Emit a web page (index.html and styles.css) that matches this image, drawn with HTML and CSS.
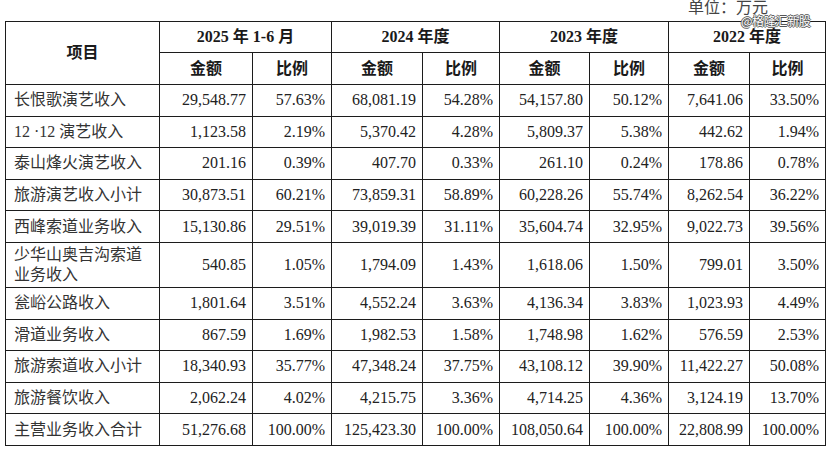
FILE: index.html
```html
<!DOCTYPE html>
<html lang="zh">
<head>
<meta charset="utf-8">
<link rel="stylesheet" href="styles.css">
</head>
<body>
<div class="page">
  <div class="unit">单位：万元</div>
  <div class="watermark">@格隆汇新股</div>
  <table class="grid">
    <colgroup>
      <col class="c-item"><col class="c-a1"><col class="c-b1"><col class="c-a2"><col class="c-b2"><col class="c-a3"><col class="c-b3"><col class="c-a4"><col class="c-b4">
    </colgroup>
    <thead>
      <tr class="h1">
        <th rowspan="2">项目</th>
        <th colspan="2">2025 年 1-6 月</th>
        <th colspan="2">2024 年度</th>
        <th colspan="2">2023 年度</th>
        <th colspan="2">2022 年度</th>
      </tr>
      <tr class="h2">
        <th>金额</th><th>比例</th><th>金额</th><th>比例</th><th>金额</th><th>比例</th><th>金额</th><th>比例</th>
      </tr>
    </thead>
    <tbody>
      <tr><td>长恨歌演艺收入</td><td>29,548.77</td><td>57.63%</td><td>68,081.19</td><td>54.28%</td><td>54,157.80</td><td>50.12%</td><td>7,641.06</td><td>33.50%</td></tr>
      <tr><td>12 ·12 演艺收入</td><td>1,123.58</td><td>2.19%</td><td>5,370.42</td><td>4.28%</td><td>5,809.37</td><td>5.38%</td><td>442.62</td><td>1.94%</td></tr>
      <tr><td>泰山烽火演艺收入</td><td>201.16</td><td>0.39%</td><td>407.70</td><td>0.33%</td><td>261.10</td><td>0.24%</td><td>178.86</td><td>0.78%</td></tr>
      <tr><td>旅游演艺收入小计</td><td>30,873.51</td><td>60.21%</td><td>73,859.31</td><td>58.89%</td><td>60,228.26</td><td>55.74%</td><td>8,262.54</td><td>36.22%</td></tr>
      <tr><td>西峰索道业务收入</td><td>15,130.86</td><td>29.51%</td><td>39,019.39</td><td>31.11%</td><td>35,604.74</td><td>32.95%</td><td>9,022.73</td><td>39.56%</td></tr>
      <tr class="tall"><td>少华山奥吉沟索道业务收入</td><td>540.85</td><td>1.05%</td><td>1,794.09</td><td>1.43%</td><td>1,618.06</td><td>1.50%</td><td>799.01</td><td>3.50%</td></tr>
      <tr><td>瓮峪公路收入</td><td>1,801.64</td><td>3.51%</td><td>4,552.24</td><td>3.63%</td><td>4,136.34</td><td>3.83%</td><td>1,023.93</td><td>4.49%</td></tr>
      <tr><td>滑道业务收入</td><td>867.59</td><td>1.69%</td><td>1,982.53</td><td>1.58%</td><td>1,748.98</td><td>1.62%</td><td>576.59</td><td>2.53%</td></tr>
      <tr><td>旅游索道收入小计</td><td>18,340.93</td><td>35.77%</td><td>47,348.24</td><td>37.75%</td><td>43,108.12</td><td>39.90%</td><td>11,422.27</td><td>50.08%</td></tr>
      <tr><td>旅游餐饮收入</td><td>2,062.24</td><td>4.02%</td><td>4,215.75</td><td>3.36%</td><td>4,714.25</td><td>4.36%</td><td>3,124.19</td><td>13.70%</td></tr>
      <tr><td>主营业务收入合计</td><td>51,276.68</td><td>100.00%</td><td>125,423.30</td><td>100.00%</td><td>108,050.64</td><td>100.00%</td><td>22,808.99</td><td>100.00%</td></tr>
    </tbody>
  </table>
</div>
</body>
</html>
```

FILE: styles.css
```css
html, body {
  margin: 0;
  padding: 0;
  background: #ffffff;
}

.page {
  position: relative;
  width: 831px;
  height: 450px;
  font-family: "Liberation Serif", "Noto Sans CJK SC", serif;
  color: #222;
}

.unit {
  height: 21px;
  box-sizing: border-box;
  padding-right: 63px;
  text-align: right;
  font-size: 16px;
  line-height: 15px;
  color: #444;
}

.watermark {
  position: absolute;
  left: 741px;
  top: 15px;
  font-family: "Noto Sans CJK SC", sans-serif;
  font-size: 12px;
  line-height: 12px;
  color: #fff;
  letter-spacing: -0.3px;
  text-shadow: 1px 0 0 #555, -1px 0 0 #555, 0 1px 0 #555, 0 -1px 0 #555;
}

.grid {
  margin-left: 5px;
  width: 820px;
  border-collapse: collapse;
  table-layout: fixed;
  font-size: 16px;
}

.c-item { width: 154px; }
.c-a1 { width: 93px; }
.c-b1 { width: 79px; }
.c-a2 { width: 91px; }
.c-b2 { width: 77px; }
.c-a3 { width: 90px; }
.c-b3 { width: 79px; }
.c-a4 { width: 81px; }
.c-b4 { width: 76px; }

.grid th,
.grid td {
  border: 1px solid #1c1c1c;
  padding: 0 7px;
  line-height: 20px;
  white-space: nowrap;
}

.grid th {
  font-weight: bold;
  text-align: center;
  color: #1a1a1a;
}

.h1 { height: 31px; }
.h2 { height: 32px; }

.grid tbody tr { height: 31.6px; }
.grid tbody tr.tall { height: 45px; }

.grid td {
  text-align: right;
  padding-right: 6px;
}

.grid td:first-child {
  text-align: left;
  padding-left: 8px;
  color: #333;
  white-space: normal;
}
```
